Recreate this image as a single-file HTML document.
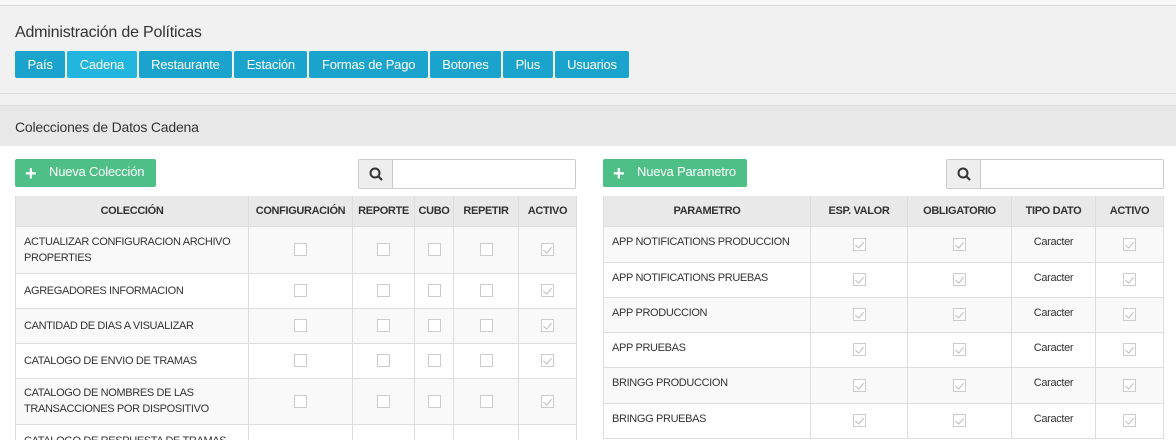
<!DOCTYPE html>
<html><head><meta charset="utf-8"><style>
*{box-sizing:border-box;margin:0;padding:0}
html,body{width:1176px;height:440px;overflow:hidden}
body{background:#fff;font-family:"Liberation Sans",Arial,sans-serif;color:#333;position:relative}
.top{position:absolute;left:0;top:0;width:1176px;height:94px;background:#f1f1f1;border-bottom:1px solid #ddd}
.strip{position:absolute;left:0;top:0;width:1176px;height:6px;background:#f7f7f7;border-bottom:1px solid #d8d8d8}
.title{position:absolute;left:15px;top:24px;font-size:16px;letter-spacing:-0.2px;color:#333}
.tabs{position:absolute;left:15px;top:51px;display:flex;gap:2px}
.tabs div{background:#1aa3cc;color:#fff;font-size:13px;height:27px;line-height:27px;padding:0 12.5px;border-radius:2px;letter-spacing:-0.2px}
.tabs div.on{background:#22b5de}
.gap{position:absolute;left:0;top:94px;width:1176px;height:12px;background:#f1f1f1;border-bottom:1px solid #ddd}
.ph{position:absolute;left:0;top:106px;width:1176px;height:40px;background:#e8e8e8;font-size:14px;letter-spacing:-0.2px;padding:13px 15px}
.btn{position:absolute;top:159px;height:28px;background:#4dbf87;color:#fff;font-size:13px;letter-spacing:-0.2px;line-height:26px;padding-left:34px;border-radius:2px}
.btn:before{content:"+";position:absolute;left:10px;top:2px;font-size:20px;font-weight:bold}
.srch{position:absolute;top:159px;height:30px;border:1px solid #ccc;border-radius:2px;background:#fff}
.srch i{position:absolute;left:0;top:0;width:34px;height:28px;background:#eee;border-right:1px solid #ccc}
.clip{position:absolute;left:0;top:196px;width:1176px;height:244px;overflow:hidden}
table{position:absolute;top:0;border-collapse:collapse;table-layout:fixed;font-size:11px;letter-spacing:-0.35px}
td,th{border:1px solid #ddd;vertical-align:middle}
th{background:#e9e9e9;height:30px;font-size:11px;color:#333;text-align:center;border-top:0}
td{padding:0 8px;line-height:16px;color:#333}
tr:nth-child(even) td{background:#f9f9f9}
td.c{text-align:center;padding:0}
.cb{display:inline-block;width:13px;height:13px;border:1px solid #ccc;background:#fff;position:relative;vertical-align:middle}
.ck:after{content:"";position:absolute;left:3px;top:1px;width:4px;height:7px;border:solid #bbb;border-width:0 1px 1px 0;transform:rotate(40deg)}
.t td.p{vertical-align:top;padding-top:7px}
</style></head><body>
<div class="top"><div class="strip"></div></div>
<div class="title">Administración de Políticas</div>
<div class="tabs"><div>País</div><div class="on">Cadena</div><div>Restaurante</div><div>Estación</div><div>Formas de Pago</div><div>Botones</div><div>Plus</div><div>Usuarios</div></div>
<div class="gap"></div>
<div class="ph">Colecciones de Datos Cadena</div>

<div class="btn" style="left:15px;width:141px">Nueva Colección</div>
<div class="srch" style="left:358px;width:218px"><i><svg width="34" height="28"><circle cx="16" cy="13" r="4.5" fill="none" stroke="#333" stroke-width="2"/><path d="M19.5 16.5l3.5 3.5" stroke="#333" stroke-width="2.2"/></svg></i></div>
<div class="btn" style="left:603px;width:144px">Nueva Parametro</div>
<div class="srch" style="left:946px;width:218px"><i><svg width="34" height="28"><circle cx="16" cy="13" r="4.5" fill="none" stroke="#333" stroke-width="2"/><path d="M19.5 16.5l3.5 3.5" stroke="#333" stroke-width="2.2"/></svg></i></div>

<div class="clip">
<table style="left:15px;width:561px">
<colgroup><col style="width:233px"><col style="width:104px"><col style="width:62px"><col style="width:39px"><col style="width:65px"><col style="width:58px"></colgroup>
<tr><th>COLECCIÓN</th><th>CONFIGURACIÓN</th><th>REPORTE</th><th>CUBO</th><th>REPETIR</th><th>ACTIVO</th></tr>
<tr style="height:47px"><td>ACTUALIZAR CONFIGURACION ARCHIVO PROPERTIES</td><td class="c"><span class="cb"></span></td><td class="c"><span class="cb"></span></td><td class="c"><span class="cb"></span></td><td class="c"><span class="cb"></span></td><td class="c"><span class="cb ck"></span></td></tr>
<tr style="height:35px"><td>AGREGADORES INFORMACION</td><td class="c"><span class="cb"></span></td><td class="c"><span class="cb"></span></td><td class="c"><span class="cb"></span></td><td class="c"><span class="cb"></span></td><td class="c"><span class="cb ck"></span></td></tr>
<tr style="height:35px"><td>CANTIDAD DE DIAS A VISUALIZAR</td><td class="c"><span class="cb"></span></td><td class="c"><span class="cb"></span></td><td class="c"><span class="cb"></span></td><td class="c"><span class="cb"></span></td><td class="c"><span class="cb ck"></span></td></tr>
<tr style="height:35px"><td>CATALOGO DE ENVIO DE TRAMAS</td><td class="c"><span class="cb"></span></td><td class="c"><span class="cb"></span></td><td class="c"><span class="cb"></span></td><td class="c"><span class="cb"></span></td><td class="c"><span class="cb ck"></span></td></tr>
<tr style="height:46px"><td>CATALOGO DE NOMBRES DE LAS TRANSACCIONES POR DISPOSITIVO</td><td class="c"><span class="cb"></span></td><td class="c"><span class="cb"></span></td><td class="c"><span class="cb"></span></td><td class="c"><span class="cb"></span></td><td class="c"><span class="cb ck"></span></td></tr>
<tr style="height:46px"><td style="vertical-align:top;padding-top:8px">CATALOGO DE RESPUESTA DE TRAMAS</td><td class="c"><span class="cb"></span></td><td class="c"><span class="cb"></span></td><td class="c"><span class="cb"></span></td><td class="c"><span class="cb"></span></td><td class="c"><span class="cb ck"></span></td></tr>
</table>

<table class="t" style="left:603px;width:560px">
<colgroup><col style="width:207px"><col style="width:97px"><col style="width:104px"><col style="width:84px"><col style="width:68px"></colgroup>
<tr><th>PARAMETRO</th><th>ESP. VALOR</th><th>OBLIGATORIO</th><th>TIPO DATO</th><th>ACTIVO</th></tr>
<tr style="height:36px"><td class="p">APP NOTIFICATIONS PRODUCCION</td><td class="c"><span class="cb ck"></span></td><td class="c"><span class="cb ck"></span></td><td class="c p">Caracter</td><td class="c"><span class="cb ck"></span></td></tr>
<tr style="height:35px"><td class="p">APP NOTIFICATIONS PRUEBAS</td><td class="c"><span class="cb ck"></span></td><td class="c"><span class="cb ck"></span></td><td class="c p">Caracter</td><td class="c"><span class="cb ck"></span></td></tr>
<tr style="height:35px"><td class="p">APP PRODUCCION</td><td class="c"><span class="cb ck"></span></td><td class="c"><span class="cb ck"></span></td><td class="c p">Caracter</td><td class="c"><span class="cb ck"></span></td></tr>
<tr style="height:35px"><td class="p">APP PRUEBAS</td><td class="c"><span class="cb ck"></span></td><td class="c"><span class="cb ck"></span></td><td class="c p">Caracter</td><td class="c"><span class="cb ck"></span></td></tr>
<tr style="height:36px"><td class="p">BRINGG PRODUCCION</td><td class="c"><span class="cb ck"></span></td><td class="c"><span class="cb ck"></span></td><td class="c p">Caracter</td><td class="c"><span class="cb ck"></span></td></tr>
<tr style="height:35px"><td class="p">BRINGG PRUEBAS</td><td class="c"><span class="cb ck"></span></td><td class="c"><span class="cb ck"></span></td><td class="c p">Caracter</td><td class="c"><span class="cb ck"></span></td></tr>
</table>
</div>
</body></html>
